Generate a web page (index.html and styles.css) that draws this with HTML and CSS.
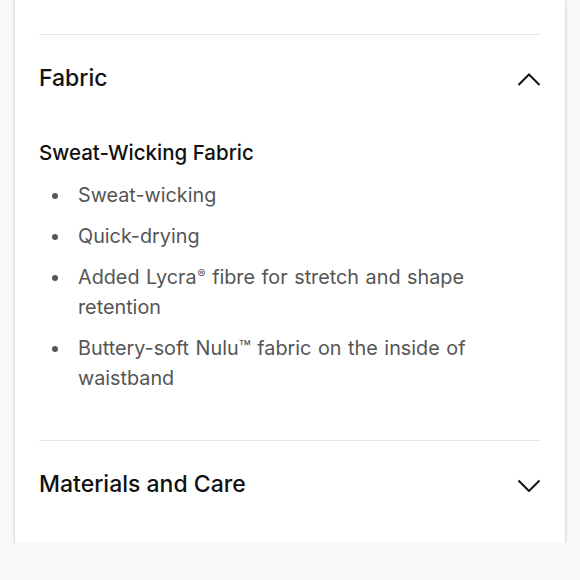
FILE: index.html
```html
<!DOCTYPE html>
<html lang="en">
<head>
<meta charset="utf-8">
<title>Product details</title>
<link rel="stylesheet" href="styles.css">
</head>
<body>
<div class="card">
  <div class="prev-end"></div>
  <section class="acc open">
    <div class="acc-head">
      <h2 class="acc-title">Fabric</h2>
      <svg class="chev" width="24" height="14" viewBox="0 0 24 14"><path d="M1.5 13 L12 2.5 L22.5 13" fill="none" stroke="#111" stroke-width="2"/></svg>
    </div>
    <div class="acc-body">
      <h3 class="sub">Sweat-Wicking Fabric</h3>
      <ul class="list">
        <li><span class="txt">Sweat-wicking</span></li>
        <li><span class="txt">Quick-drying</span></li>
        <li><span class="txt">Added Lycra<sup>®</sup> fibre for stretch and shape retention</span></li>
        <li><span class="txt">Buttery-soft Nulu™ fabric on the inside of waistband</span></li>
      </ul>
    </div>
  </section>
  <section class="acc last">
    <div class="acc-head">
      <h2 class="acc-title">Materials and Care</h2>
      <svg class="chev" width="24" height="14" viewBox="0 0 24 14"><path d="M1.5 2.5 L12 13 L22.5 2.5" fill="none" stroke="#111" stroke-width="2"/></svg>
    </div>
  </section>
</div>
</body>
</html>
```
FILE: styles.css
```css
html, body {
  margin: 0;
  padding: 0;
  background: #f8f8f8;
  font-family: "Inter", "Roboto", "Liberation Sans", sans-serif;
}
.card {
  margin: 0 15px;
  background: #fff;
  padding: 0 24px;
  box-shadow: 0 1px 3px rgba(0,0,0,0.25);
}
.prev-end {
  height: 34px;
}
.acc {
  border-top: 1px solid #e8e8e8;
}
.acc-head {
  display: flex;
  align-items: center;
  justify-content: space-between;
  height: 86px;
}
.acc-title {
  margin: 0;
  font-size: 23px;
  font-weight: 500;
  color: #111;
}
.chev {
  display: block;
  margin-top: 2px;
}
.acc-body {
  padding-top: 17px;
  padding-bottom: 47px;
}
.sub {
  margin: 0 0 12px;
  font-size: 20.5px;
  font-weight: 500;
  color: #111;
  line-height: 30px;
}
.list {
  list-style: none;
  margin: 0;
  padding: 0 0 0 13px;
  color: #555;
  font-size: 19.8px;
  line-height: 30px;
  word-spacing: 1px;
}
.list li {
  display: flex;
  margin-bottom: 11px;
}
.list li::before {
  content: "";
  flex-shrink: 0;
  width: 6px;
  height: 6px;
  border-radius: 50%;
  background: #555;
  margin-top: 13px;
  margin-right: 20px;
}
.list li:last-child {
  margin-bottom: 0;
}
.txt {
  flex: 1;
}
.list sup {
  font-size: 12px;
  vertical-align: 6px;
  line-height: 1;
  margin-left: 1px;
}
.acc.last {
  padding-bottom: 16px;
}
```
